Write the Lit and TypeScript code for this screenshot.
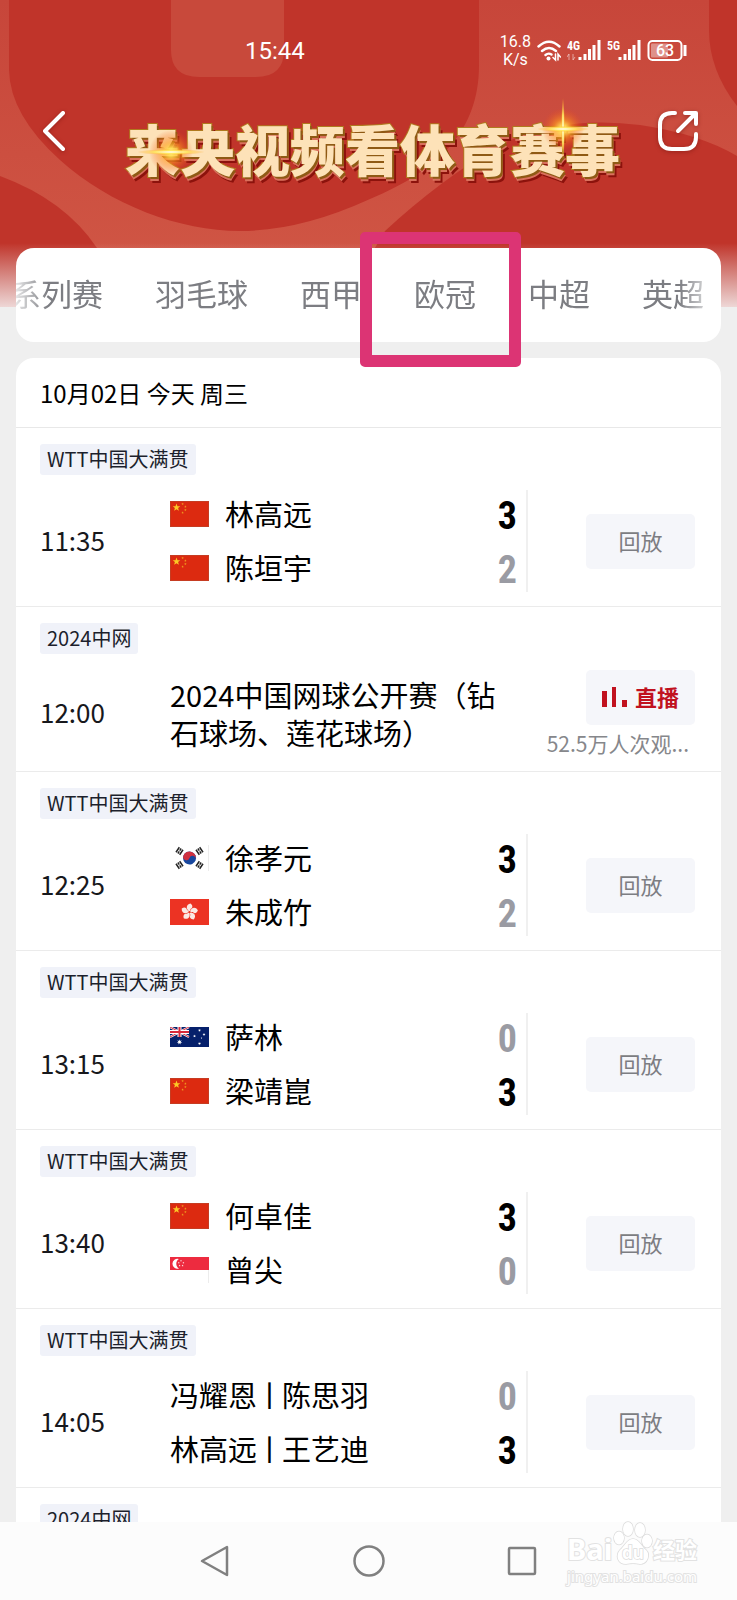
import { LitElement, html, svg, css, nothing } from "lit";
import { customElement, property } from "lit/decorators.js";

type Flag = "cn" | "kr" | "hk" | "au" | "sg";

interface Side {
  players: string[];
  score: number;
  flag?: Flag;
}

interface Match {
  tag: string;
  time: string;
  sides?: [Side, Side];
  title?: string;
  live?: boolean;
  viewers?: string;
}

const TABS = ["系列赛", "羽毛球", "西甲", "欧冠", "中超", "英超"];

const WTT = "WTT中国大满贯";

const MATCHES: Match[] = [
  { tag: WTT, time: "11:35", sides: [{ players: ["林高远"], score: 3, flag: "cn" }, { players: ["陈垣宇"], score: 2, flag: "cn" }] },
  { tag: "2024中网", time: "12:00", title: "2024中国网球公开赛（钻石球场、莲花球场）", live: true, viewers: "52.5万人次观..." },
  { tag: WTT, time: "12:25", sides: [{ players: ["徐孝元"], score: 3, flag: "kr" }, { players: ["朱成竹"], score: 2, flag: "hk" }] },
  { tag: WTT, time: "13:15", sides: [{ players: ["萨林"], score: 0, flag: "au" }, { players: ["梁靖崑"], score: 3, flag: "cn" }] },
  { tag: WTT, time: "13:40", sides: [{ players: ["何卓佳"], score: 3, flag: "cn" }, { players: ["曾尖"], score: 0, flag: "sg" }] },
  { tag: WTT, time: "14:05", sides: [{ players: ["冯耀恩", "陈思羽"], score: 0 }, { players: ["林高远", "王艺迪"], score: 3 }] },
  { tag: "2024中网", time: "14:30", title: "2024中国网球公开赛" },
];

const star = (cx: number, cy: number, r: number, fill: string, points = 5) => {
  const pts: string[] = [];
  for (let i = 0; i < points * 2; i++) {
    const rad = i % 2 ? r * 0.42 : r;
    const a = (Math.PI * i) / points - Math.PI / 2;
    pts.push(`${(cx + rad * Math.cos(a)).toFixed(2)},${(cy + rad * Math.sin(a)).toFixed(2)}`);
  }
  return svg`<polygon points=${pts.join(" ")} fill=${fill}></polygon>`;
};

const trigram = (x: number, y: number, angle: number) => svg`
  <g transform="translate(${x} ${y}) rotate(${angle})" stroke="#222" stroke-width="1.500">
    <path d="M-3 -2.200H3M-3 0H-.4M.4 0H3M-3 2.200H3"></path>
  </g>`;

const FLAGS = {
  cn: html`<svg class="flag" viewBox="0 0 39 26" width="39" height="26" role="img" aria-label="中国">
    <rect width="39" height="26" fill="#dc2a10"></rect>
    <rect x=".5" y=".5" width="38" height="25" fill="none" stroke="#b8492f" stroke-opacity=".6"></rect>
    ${star(6.5, 6.5, 4, "#fbc926")}${star(12.6, 3, 1.3, "#f0a020")}${star(15.4, 5.6, 1.3, "#f0a020")}
    ${star(15.4, 9, 1.3, "#f0a020")}${star(12.6, 11.6, 1.3, "#f0a020")}
  </svg>`,
  kr: html`<svg class="flag" viewBox="0 0 39 26" width="39" height="26" role="img" aria-label="韩国">
    <rect width="39" height="26" fill="#fff"></rect>
    <path d="M38.500 0V26" stroke="#ececec"></path>
    <g transform="rotate(20 19.500 13)">
      <circle cx="19.500" cy="13" r="6.500" fill="#17479e"></circle>
      <path d="M13 13a6.500 6.500 0 0 1 13 0a3.250 3.250 0 0 0 -6.500 0a3.250 3.250 0 0 1 -6.500 0z" fill="#d0303f"></path>
    </g>
    ${trigram(9.5, 6, -56)}${trigram(29.5, 6, 56)}${trigram(9.5, 20, 56)}${trigram(29.5, 20, -56)}
  </svg>`,
  hk: html`<svg class="flag" viewBox="0 0 39 26" width="39" height="26" role="img" aria-label="中国香港">
    <rect width="39" height="26" fill="#ec3323"></rect>
    ${[0, 72, 144, 216, 288].map(
      (a) => svg`<path transform="rotate(${a} 19.500 13)" d="M19.500 12.500C15.500 10 16 5.500 20.500 4.500C23 6.500 23 9 20.500 10C20.500 11 20 12 19.500 12.500z" fill="#fbe9e4"></path>`,
    )}
    <circle cx="19.500" cy="13" r="1" fill="#ec3323"></circle>
  </svg>`,
  au: html`<svg class="flag" viewBox="0 0 39 20" width="39" height="20" role="img" aria-label="澳大利亚">
    <rect width="39" height="20" fill="#06206b"></rect>
    <path d="M0 0L19 10M19 0L0 10" stroke="#fff" stroke-width="2"></path>
    <path d="M0 0L19 10M19 0L0 10" stroke="#d8283a" stroke-width="1"></path>
    <path d="M9.500 0V10M0 5H19" stroke="#fff" stroke-width="4"></path>
    <path d="M9.500 0V10M0 5H19" stroke="#d8283a" stroke-width="2"></path>
    ${star(9.5, 15, 2.8, "#fff", 7)}${star(29.5, 3.3, 1.5, "#fff", 7)}${star(24.5, 9, 1.5, "#fff", 7)}
    ${star(34, 7.5, 1.5, "#fff", 7)}${star(29.5, 16.5, 1.6, "#fff", 7)}${star(31.5, 11, 0.9, "#fff")}
  </svg>`,
  sg: html`<svg class="flag" viewBox="0 0 39 26" width="39" height="26" role="img" aria-label="新加坡">
    <rect width="39" height="26" fill="#fff"></rect>
    <rect width="39" height="13" fill="#ed2b3f"></rect>
    <path d="M38.500 13V26" stroke="#ececec"></path>
    <path d="M9 2A5 5 0 1 0 9 11.500A5.500 5.500 0 0 1 9 2z" fill="#fff"></path>
    ${star(11, 3.8, 1, "#fff")}${star(8.8, 5.8, 1, "#fff")}${star(13.4, 5.8, 1, "#fff")}
    ${star(9.6, 8.6, 1, "#fff")}${star(12.6, 8.6, 1, "#fff")}
  </svg>`,
};

@customElement("match-row")
class MatchRow extends LitElement {
  @property({ attribute: false }) match!: Match;

  static styles = css`
    :host {
      display: flex;
      flex-direction: column;
      align-items: flex-start;
      gap: 12px;
      padding: 16px 26px 11px 24px;
      border-bottom: 1px solid #ebebeb;
    }
    .tag {
      padding: 0 7px 2px;
      border-radius: 3px;
      background: #f0f2f9;
      color: #1c1f2c;
      font-size: 20px;
      line-height: 29px;
    }
    .body {
      display: grid;
      grid-template-columns: 130px 1fr 169px;
      align-items: center;
      align-self: stretch;
      min-height: 94px;
    }
    .time {
      padding-bottom: 2px;
      font-size: 26px;
      line-height: 36px;
      color: #17181c;
    }
    .side {
      display: flex;
      align-items: center;
      height: 54px;
      padding-right: 9px;
    }
    .flag {
      display: block;
      margin-right: 16px;
    }
    .name {
      flex: 1;
      padding-bottom: 2px;
      font-size: 29px;
      line-height: 38px;
      color: #000;
    }
    .sep {
      margin: 0 -2px;
    }
    .score {
      padding-top: 4px;
      font: bold 38px/50px "Liberation Sans Narrow", "Roboto Condensed", "Noto Sans CJK SC", sans-serif;
      color: #9a9ba3;
    }
    .win {
      color: #000;
    }
    .title {
      margin: 0;
      padding-right: 9px;
      font-size: 29px;
      font-weight: 400;
      line-height: 38px;
      color: #000;
    }
    .action {
      display: flex;
      flex-direction: column;
      justify-content: center;
      align-items: flex-end;
      gap: 4px;
    }
    .ruled {
      height: 102px;
      border-left: 2px solid #f0f0f0;
    }
    button {
      display: flex;
      align-items: center;
      justify-content: center;
      gap: 8px;
      width: 109px;
      height: 55px;
      padding: 0;
      border: 0;
      border-radius: 5px;
      background: #f5f6fa;
      color: #7c7d82;
      font: inherit;
      font-size: 22px;
    }
    .label {
      padding-bottom: 2px;
      line-height: 30px;
    }
    .live {
      color: #c1121f;
      font-weight: 700;
    }
    .viewers {
      padding-right: 6px;
      font-size: 21px;
      line-height: 28px;
      color: #86878b;
      white-space: nowrap;
    }
  `;

  render() {
    const m = this.match;
    return html`
      <span class="tag">${m.tag}</span>
      <div class="body">
        <time class="time">${m.time}</time>
        ${m.sides
          ? html`<div>
              ${m.sides.map(
                (s, i) => html`<div class="side">
                  ${s.flag ? FLAGS[s.flag] : nothing}
                  <span class="name">${s.players.map((p, n) => html`${n ? html`<span class="sep">丨</span>` : nothing}${p}`)}</span>
                  <span class="score ${s.score > m.sides![1 - i].score ? "win" : ""}">${s.score}</span>
                </div>`,
              )}
            </div>`
          : html`<h3 class="title">${m.title}</h3>`}
        <div class="action ${m.sides ? "ruled" : ""}">
          ${m.live
            ? html`<button class="live" type="button">
                  <svg width="25" height="20" viewBox="0 0 25 20" fill="currentColor" aria-hidden="true">
                    <path d="M0 4H5V20H0zM10 0H14V20H10zM20 13H25V20H20z"></path>
                  </svg>
                  <span class="label">直播</span>
                </button>
                <span class="viewers">${m.viewers}</span>`
            : html`<button type="button"><span class="label">回放</span></button>`}
        </div>
      </div>
    `;
  }
}

@customElement("status-bar")
class StatusBar extends LitElement {
  static styles = css`
    :host {
      display: flex;
      align-items: center;
      justify-content: space-between;
      height: 40px;
      padding: 2px 50px 0 245px;
      box-sizing: border-box;
      color: #fff;
      font-family: Roboto, sans-serif;
    }
    .clock {
      font-size: 24px;
      line-height: 28px;
    }
    .icons {
      display: flex;
      align-items: center;
      gap: 6px;
    }
    .speed {
      font-size: 16px;
      line-height: 18px;
      text-align: center;
    }
    text {
      font-family: Roboto, sans-serif;
      font-weight: 500;
      fill: #fff;
    }
    .net {
      font-family: "Roboto Condensed", Roboto, sans-serif;
      font-weight: 700;
    }
  `;

  private signal(label: string, data: boolean) {
    return html`<svg width="34" height="22" viewBox="0 0 34 22" role="img" aria-label=${label}>
      <text class="net" x="0" y="10" font-size="12">${label}</text>
      ${data ? svg`<path d="M2 20V14L0 17M6 14V20L8 17" stroke="#fff" stroke-opacity=".5" fill="none"></path>` : nothing}
      <path d="M13 20V17M18 20V14M22.500 20V9M27 20V5M32 20V0" stroke="#fff" stroke-width="3"></path>
    </svg>`;
  }

  render() {
    return html`
      <time class="clock">15:44</time>
      <div class="icons">
        <div class="speed">16.8<br />K/s</div>
        <svg width="24" height="22" viewBox="0 0 24 22" fill="none" stroke="#fff" stroke-width="2.400" stroke-linecap="round" role="img" aria-label="Wi-Fi">
          <path d="M1.500 6.500Q12 -3 22.500 6.500M5 11Q12 5 19 11M8.500 15Q11.500 12.500 14.500 14.500"></path>
          <circle cx="11.500" cy="18.500" r="2" fill="#fff" stroke="none"></circle>
          <path d="M18.500 14V20L16 17.500M21 20V14L23.500 17" stroke-width="1.500"></path>
        </svg>
        ${this.signal("4G", true)} ${this.signal("5G", false)}
        <svg width="40" height="22" viewBox="0 0 40 22" role="img" aria-label="63%">
          <rect x="1.500" y="1" width="33" height="19" rx="4" fill="none" stroke="#fff" stroke-width="2"></rect>
          <rect x="4" y="3.500" width="17" height="14" rx="1" fill="#fff" fill-opacity=".4"></rect>
          <path d="M38 5V16" stroke="#fff" stroke-width="3"></path>
          <text x="18" y="16" font-size="16" text-anchor="middle">63</text>
        </svg>
      </div>
    `;
  }
}

@customElement("baidu-mark")
class BaiduMark extends LitElement {
  static styles = css`
    :host {
      display: flex;
      flex-direction: column;
      font-family: "Noto Sans", "Noto Sans CJK SC", sans-serif;
      font-weight: 700;
      color: #fff;
      -webkit-text-stroke: 2px #e2e2e2;
      paint-order: stroke fill;
      white-space: nowrap;
    }
    .brand {
      display: flex;
      align-items: flex-end;
      justify-content: space-between;
      font-size: 29px;
      line-height: 32px;
    }
    .cn {
      font-size: 22px;
    }
    .site {
      font-size: 15px;
      line-height: 22px;
      font-weight: 400;
    }
    text {
      font: 700 17px "Noto Sans", sans-serif;
    }
  `;

  render() {
    return html`
      <div class="brand">
        <span>Bai</span>
        <svg width="40" height="44" viewBox="0 0 40 44" fill="#fff" stroke="#dcdcdc" stroke-width="1.500" aria-hidden="true">
          <ellipse cx="6" cy="17" rx="5" ry="6.500"></ellipse>
          <ellipse cx="15" cy="8" rx="5" ry="7"></ellipse>
          <ellipse cx="27" cy="9" rx="5" ry="7"></ellipse>
          <ellipse cx="34" cy="20" rx="5" ry="6.500"></ellipse>
          <path d="M20 18C26 18 28 25 33 29C38 34 34 43 27 43C23 42 17 42 13 43C5 43 2 35 7 29C12 25 14 18 20 18z"></path>
          <text x="20" y="38" text-anchor="middle">du</text>
        </svg>
        <span class="cn">经验</span>
      </div>
      <span class="site">jingyan.baidu.com</span>
    `;
  }
}

@customElement("app-root")
class AppRoot extends LitElement {
  static styles = css`
    :host {
      display: flex;
      flex-direction: column;
      height: 100vh;
      overflow: hidden;
      background: #efefef;
      font-family: "Noto Sans CJK SC", sans-serif;
    }
    .page {
      flex: 1;
      min-height: 0;
      overflow: hidden;
      display: flex;
      flex-direction: column;
      gap: 16px;
    }
    .page > * {
      flex: none;
    }
    .top {
      position: relative;
      padding: 30px 0 0;
    }
    .backdrop {
      position: absolute;
      top: 0;
      left: 0;
      width: 100%;
      height: 307px;
    }
    .head {
      position: relative;
    }
    .bar {
      display: flex;
      justify-content: space-between;
      align-items: flex-start;
      padding: 39px 36px 59px 32px;
    }
    .bar button {
      width: 44px;
      height: 44px;
      padding: 0;
      border: 0;
      background: none;
      filter: drop-shadow(0 1px 2px rgba(90, 10, 5, 0.4));
    }
    h1 {
      position: relative;
      margin: 0 0 0 12px;
      padding-bottom: 4px;
      font-size: 55px;
      font-weight: 900;
      line-height: 76px;
      white-space: nowrap;
      color: #fde2b8;
      -webkit-text-stroke: 2px #b07a1e;
      paint-order: stroke fill;
      text-shadow: 2px 2px 0 #8f5a14, 2px 4px 0 #d9705c, 4px 6px 0 #8c120c;
    }
    .flare {
      position: absolute;
      top: -40px;
      left: 0;
      width: 100%;
      height: 120px;
      overflow: visible;
    }
    .tabs-card {
      position: relative;
      margin: 0 16px;
      border-radius: 18px;
      background: #fff;
    }
    .tabs {
      display: flex;
      gap: 52px;
      margin-right: 16px;
      overflow: hidden;
      mask-image: linear-gradient(90deg, rgba(0, 0, 0, 0.2), #000 32px, #000 calc(100% - 26px), rgba(0, 0, 0, 0.35));
    }
    .tabs button {
      flex: none;
      padding: 0 0 4px;
      border: 0;
      background: none;
      font: inherit;
      font-size: 31px;
      line-height: 90px;
      color: #7c7d82;
    }
    .tabs button:first-child {
      margin-left: -6px;
    }
    .marker {
      position: absolute;
      top: -16px;
      left: 344px;
      width: 161px;
      height: 135px;
      box-sizing: border-box;
      border: 12px solid #dc3474;
      border-radius: 5px;
      pointer-events: none;
      z-index: 2;
    }
    .list {
      margin: 0 16px;
      border-radius: 18px 18px 0 0;
      background: #fff;
    }
    .date {
      margin: 0;
      padding: 0 24px;
      border-bottom: 1px solid #e8e8e8;
      font-size: 24px;
      font-weight: 400;
      line-height: 69px;
      color: #000;
    }
    .sysnav {
      position: relative;
      flex: none;
      display: flex;
      justify-content: center;
      align-items: center;
      gap: 117px;
      height: 78px;
      background: #fcfcfc;
    }
    .sysnav button {
      width: 36px;
      height: 36px;
      padding: 0;
      border: 0;
      background: none;
    }
    .sysnav svg {
      display: block;
    }
    .mark {
      position: absolute;
      right: 40px;
      bottom: 13px;
    }
  `;

  render() {
    return html`
      <div class="page">
        <div class="top">
          <svg class="backdrop" viewBox="0 0 737 307" preserveAspectRatio="xMidYMin slice" aria-hidden="true">
            <defs>
              <linearGradient id="band" x2="0" y2="1">
                <stop offset="0" stop-color="#c7463a"></stop>
                <stop offset="1" stop-color="#d15846"></stop>
              </linearGradient>
              <linearGradient id="fade" x2="0" y2="1">
                <stop offset="0" stop-color="#efefef" stop-opacity="0"></stop>
                <stop offset="1" stop-color="#f3e9e9" stop-opacity=".9"></stop>
              </linearGradient>
            </defs>
            <rect width="737" height="307" fill="url(#band)"></rect>
            <path d="M9 0H479V65C479 130 440 170 370 199Q300 231 240 231C180 231 110 205 60 160Q10 115 9 70z" fill="#c0342a"></path>
            <path d="M171 0H284V50Q284 77 256 77H199Q171 77 171 50z" fill="#c8493b"></path>
            <path d="M0 176Q65 200 97 248V307H0z" fill="#c0342a"></path>
            <path d="M385 231Q440 180 500 145Q560 115 640 125Q700 134 737 156V307H340z" fill="#c0342a"></path>
            <path d="M709 0H737V106Q709 70 709 30z" fill="#c0342a"></path>
            <rect y="243" width="737" height="64" fill="url(#fade)"></rect>
          </svg>
          <header class="head">
            <status-bar></status-bar>
            <div class="bar">
              <button type="button" aria-label="返回">
                <svg width="44" height="44" viewBox="0 0 44 44" fill="none" stroke="#fff" stroke-width="4" stroke-linecap="round" stroke-linejoin="round">
                  <path d="M31 4L13 22L31 40"></path>
                </svg>
              </button>
              <h1>
                来央视频看体育赛事
                <svg class="flare" viewBox="0 0 495 120" aria-hidden="true">
                  <defs>
                    <radialGradient id="glow">
                      <stop offset="0" stop-color="#fffbe0"></stop>
                      <stop offset=".15" stop-color="#ffe45c"></stop>
                      <stop offset=".45" stop-color="#ff9a20" stop-opacity=".6"></stop>
                      <stop offset="1" stop-color="#f04818" stop-opacity="0"></stop>
                    </radialGradient>
                    <radialGradient id="ray">
                      <stop offset="0" stop-color="#fff"></stop>
                      <stop offset=".5" stop-color="#ffe860" stop-opacity=".9"></stop>
                      <stop offset="1" stop-color="#ffa020" stop-opacity="0"></stop>
                    </radialGradient>
                  </defs>
                  <circle cx="46" cy="83" r="22" fill="url(#glow)"></circle>
                  <ellipse cx="46" cy="83" rx="34" ry="3" fill="url(#ray)"></ellipse>
                  <circle cx="438" cy="60" r="21" fill="url(#glow)"></circle>
                  <ellipse cx="438" cy="60" rx="2" ry="32" fill="url(#ray)"></ellipse>
                  <ellipse cx="438" cy="60" rx="26" ry="3" fill="url(#ray)"></ellipse>
                </svg>
              </h1>
              <button type="button" aria-label="分享">
                <svg width="44" height="44" viewBox="0 0 44 44" fill="none" stroke="#fff" stroke-width="4" stroke-linecap="round" stroke-linejoin="round">
                  <path d="M18 4H15Q3 4 3 16V28Q3 40 15 40H27Q39 40 39 28V25M21 22L38 5M28 4H39V15"></path>
                </svg>
              </button>
            </div>
          </header>
          <div class="tabs-card">
            <nav class="tabs">${TABS.map((t) => html`<button type="button">${t}</button>`)}</nav>
            <div class="marker"></div>
          </div>
        </div>
        <section class="list">
          <h2 class="date">10月02日 今天 周三</h2>
          ${MATCHES.map((m) => html`<match-row .match=${m}></match-row>`)}
        </section>
      </div>
      <nav class="sysnav">
        <button type="button" aria-label="返回">
          <svg width="36" height="36" viewBox="0 0 36 36" fill="none" stroke="#808080" stroke-width="2.500" stroke-linejoin="round">
            <path d="M4 18L29 4V32z"></path>
          </svg>
        </button>
        <button type="button" aria-label="主页">
          <svg width="36" height="36" viewBox="0 0 36 36" fill="none" stroke="#808080" stroke-width="2.500"><circle cx="18" cy="18" r="14.500"></circle></svg>
        </button>
        <button type="button" aria-label="最近任务">
          <svg width="36" height="36" viewBox="0 0 36 36" fill="none" stroke="#808080" stroke-width="2.500"><rect x="5" y="5" width="26" height="26" rx="1"></rect></svg>
        </button>
        <baidu-mark class="mark"></baidu-mark>
      </nav>
    `;
  }
}
